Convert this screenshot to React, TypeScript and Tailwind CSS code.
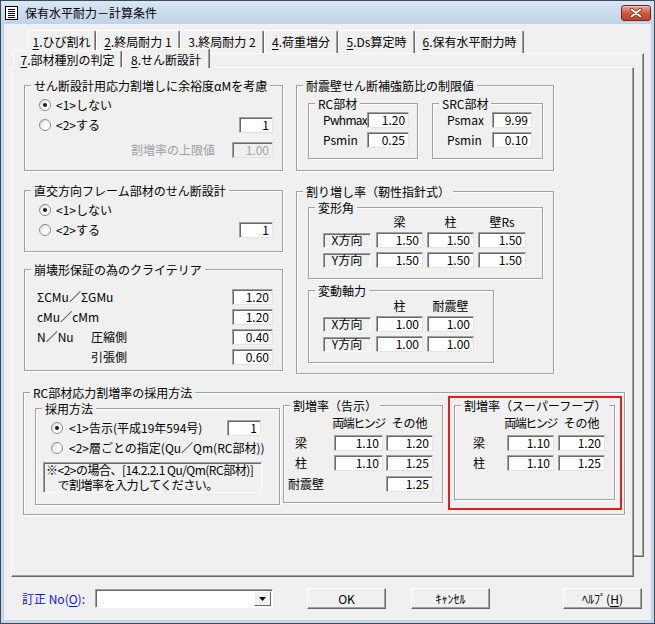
import React from "react";

const FONT = "font-['Noto_Sans_CJK_JP',sans-serif]";

type Kids = { children?: React.ReactNode };

const Group = ({ title, cls, children }: Kids & { title: string; cls: string }) => (
  <div
    className={`relative shrink-0 border border-[#a0a0a0] shadow-[1px_1px_0_#fff,inset_1px_1px_0_#fff] ${cls}`}
  >
    <span className="absolute -top-[7px] left-[6px] px-[3px] bg-[#f0f0f0] leading-[13px] whitespace-nowrap">
      {title}
    </span>
    {children}
  </div>
);

const Field = ({ v, w, dim }: { v: string; w: string; dim?: boolean }) => (
  <div
    className={`${w} h-[16px] shrink-0 flex items-center justify-end pr-[3px] border border-t-[#a0a0a0] border-l-[#a0a0a0] border-r-[#e3e3e3] border-b-[#e3e3e3] shadow-[inset_1px_1px_0_#696969] leading-none ${
      dim ? "bg-[#f0f0f0] text-[#a0a0a0]" : "bg-white text-black"
    }`}
  >
    {v}
  </div>
);

const RowLabel = ({ t }: { t: string }) => (
  <div className="w-[48px] h-[15px] shrink-0 flex items-center justify-center border border-t-[#a0a0a0] border-l-[#a0a0a0] border-r-white border-b-white shadow-[inset_1px_1px_0_#696969] bg-[#f0f0f0] leading-none">
    {t}
  </div>
);

const Radio = ({ on }: { on?: boolean }) => (
  <span className="w-[12px] h-[12px] shrink-0 rounded-full border border-[#8a8a8a] bg-linear-to-br from-[#cfcfcf] via-white to-white flex items-center justify-center">
    {on && <span className="w-[4px] h-[4px] rounded-full bg-[#1a1a1a]" />}
  </span>
);

const Tab = ({ n, label, cls }: { n: string; label: string; cls: string }) => (
  <div
    className={`shrink-0 flex justify-center bg-[#f0f0f0] border-t border-l border-r border-t-white border-l-white border-r-[#696969] rounded-t-[2px] shadow-[inset_-1px_0_0_#a0a0a0] whitespace-nowrap leading-[14px] ${cls}`}
  >
    <span>
      <span className="underline underline-offset-2">{n}</span>.{label}
    </span>
  </div>
);

const Btn = ({ children }: Kids) => (
  <div className="w-[79px] h-[21px] shrink-0 flex items-center justify-center border border-t-white border-l-white border-r-[#696969] border-b-[#696969] shadow-[inset_-1px_-1px_0_#a0a0a0] bg-[#f0f0f0] leading-none">
    {children}
  </div>
);

const TitleIcon = () => (
  <svg width="13" height="14" viewBox="0 0 13 14" className="shrink-0">
    <rect x="0.5" y="0.5" width="12" height="13" fill="#fff" stroke="#000" />
    <path d="M3 3.5h7M3 5.5h7M3 7.5h7M3 9.5h7M3 11.5h7" stroke="#000" />
  </svg>
);

const CloseBtn = () => (
  <div className="ml-auto mr-[3px] w-[30px] h-[16px] rounded-[3px] border border-[#6d2618] bg-linear-to-b from-[#e8a493] via-[#cf5a40] to-[#c0412a] flex items-center justify-center shadow-[inset_0_1px_0_#f3c6ba]">
    <svg width="12" height="10" viewBox="0 0 12 10">
      <path d="M1.5 1.5l9 7M10.5 1.5l-9 7" stroke="#5a1d12" strokeWidth="3.4" strokeLinecap="round" />
      <path d="M1.5 1.5l9 7M10.5 1.5l-9 7" stroke="#fff" strokeWidth="2" strokeLinecap="round" />
    </svg>
  </div>
);

const LeftColumn = () => (
  <div className="flex flex-col w-[259px] shrink-0">
    <Group title="せん断設計用応力割増しに余裕度αMを考慮" cls="h-[86px]">
      <div className="pt-[9px] pl-[14px] pr-[9px]">
        <div className="h-[20px] flex items-center">
          <Radio on />
          <span className="ml-[5px]">&lt;1&gt;しない</span>
        </div>
        <div className="h-[20px] flex items-center">
          <Radio />
          <span className="ml-[5px]">&lt;2&gt;する</span>
          <Field v="1" w="w-[34px] ml-auto" />
        </div>
        <div className="h-[20px] mt-[5px] flex items-center justify-end gap-[17px]">
          <span className="text-[#a0a0a0]">割増率の上限値</span>
          <Field v="1.00" w="w-[41px]" dim />
        </div>
      </div>
    </Group>

    <Group title="直交方向フレーム部材のせん断設計" cls="h-[62px] mt-[19px]">
      <div className="pt-[9px] pl-[14px] pr-[9px]">
        <div className="h-[20px] flex items-center">
          <Radio on />
          <span className="ml-[5px]">&lt;1&gt;しない</span>
        </div>
        <div className="h-[20px] flex items-center">
          <Radio />
          <span className="ml-[5px]">&lt;2&gt;する</span>
          <Field v="1" w="w-[34px] ml-auto" />
        </div>
      </div>
    </Group>

    <Group title="崩壊形保証の為のクライテリア" cls="h-[102px] mt-[17px]">
      <div className="pt-[17px] pl-[12px] pr-[9px]">
        <div className="h-[20px] flex items-center">
          <span>ΣCMu／ΣGMu</span>
          <Field v="1.20" w="w-[41px] ml-auto" />
        </div>
        <div className="h-[20px] flex items-center">
          <span>cMu／cMm</span>
          <Field v="1.20" w="w-[41px] ml-auto" />
        </div>
        <div className="h-[20px] flex items-center">
          <span className="w-[54px] shrink-0">N／Nu</span>
          <span>圧縮側</span>
          <Field v="0.40" w="w-[41px] ml-auto" />
        </div>
        <div className="h-[20px] flex items-center">
          <span className="w-[54px] shrink-0" />
          <span>引張側</span>
          <Field v="0.60" w="w-[41px] ml-auto" />
        </div>
      </div>
    </Group>
  </div>
);

const RightColumn = () => (
  <div className="flex flex-col w-[258px] shrink-0">
    <Group title="耐震壁せん断補強筋比の制限値" cls="h-[86px]">
      <div className="pt-[17px] pl-[11px] flex gap-[14px]">
        <Group title="RC部材" cls="w-[110px] h-[56px]">
          <div className="pt-[8px] pl-[14px] pr-[8px] flex flex-col gap-[4px]">
            <div className="h-[16px] flex items-center">
              <span className="tracking-[-0.7px]">Pwhmax</span>
              <Field v="1.20" w="w-[42px] ml-auto" />
            </div>
            <div className="h-[16px] flex items-center">
              <span>Psmin</span>
              <Field v="0.25" w="w-[42px] ml-auto" />
            </div>
          </div>
        </Group>
        <Group title="SRC部材" cls="w-[111px] h-[56px]">
          <div className="pt-[8px] pl-[14px] pr-[10px] flex flex-col gap-[4px]">
            <div className="h-[16px] flex items-center">
              <span>Psmax</span>
              <Field v="9.99" w="w-[40px] ml-auto" />
            </div>
            <div className="h-[16px] flex items-center">
              <span>Psmin</span>
              <Field v="0.10" w="w-[40px] ml-auto" />
            </div>
          </div>
        </Group>
      </div>
    </Group>

    <Group title="割り増し率（靭性指針式）" cls="h-[183px] mt-[20px]">
      <div className="pt-[15px] pl-[11px] flex flex-col gap-[11px]">
        <Group title="変形角" cls="w-[235px] h-[72px]">
          <div className="pt-[7px] pl-[14px]">
            <div className="h-[14px] flex">
              <div className="w-[48px]" />
              <div className="ml-[5px] w-[47px] flex justify-center">梁</div>
              <div className="ml-[4px] w-[47px] flex justify-center">柱</div>
              <div className="ml-[4px] w-[48px] flex justify-center">壁Rs</div>
            </div>
            {["X方向", "Y方向"].map((r, i) => (
              <div key={r} className={`h-[16px] flex items-center ${i === 0 ? "mt-[3px]" : "mt-[4px]"}`}>
                <RowLabel t={r} />
                <Field v="1.50" w="w-[47px] ml-[5px]" />
                <Field v="1.50" w="w-[47px] ml-[4px]" />
                <Field v="1.50" w="w-[48px] ml-[4px]" />
              </div>
            ))}
          </div>
        </Group>
        <Group title="変動軸力" cls="w-[186px] h-[73px]">
          <div className="pt-[8px] pl-[14px]">
            <div className="h-[14px] flex">
              <div className="w-[48px]" />
              <div className="ml-[5px] w-[47px] flex justify-center">柱</div>
              <div className="ml-[4px] w-[47px] flex justify-center">耐震壁</div>
            </div>
            {["X方向", "Y方向"].map((r, i) => (
              <div key={r} className={`h-[16px] flex items-center ${i === 0 ? "mt-[3px]" : "mt-[4px]"}`}>
                <RowLabel t={r} />
                <Field v="1.00" w="w-[47px] ml-[5px]" />
                <Field v="1.00" w="w-[47px] ml-[4px]" />
              </div>
            ))}
          </div>
        </Group>
      </div>
    </Group>
  </div>
);

const MethodGroup = () => (
  <Group title="RC部材応力割増率の採用方法" cls="w-[602px] h-[123px] mt-[18px] -ml-[1px]">
    <div className="flex items-start pl-[11px]">
      <Group title="採用方法" cls="w-[245px] h-[97px] mt-[15px]">
        <div className="pt-[9px] pl-[15px] pr-[18px]">
          <div className="h-[20px] flex items-center">
            <Radio on />
            <span className="ml-[6px] whitespace-nowrap">&lt;1&gt;告示(平成19年594号)</span>
            <Field v="1" w="w-[34px] ml-auto" />
          </div>
          <div className="h-[20px] flex items-center">
            <Radio />
            <span className="ml-[6px] whitespace-nowrap">&lt;2&gt;層ごとの指定(Qu／Qm(RC部材))</span>
          </div>
        </div>
        <div className="ml-[7px] mt-[4px] w-[219px] h-[31px] border border-t-[#a0a0a0] border-l-[#a0a0a0] border-r-white border-b-white shadow-[inset_1px_1px_0_#696969] bg-[#f0f0f0] pl-[2px] leading-[14px] whitespace-nowrap tracking-[-0.5px]">
          <div className="h-[14px]">※&lt;2&gt;の場合、[14.2.2.1 Qu/Qm(RC部材)]</div>
          <div className="h-[14px] mt-[1px]">　で割増率を入力してください。</div>
        </div>
      </Group>

      <Group title="割増率（告示）" cls="w-[160px] h-[98px] mt-[12px] ml-[3px]">
        <div className="pt-[10px]">
          <div className="h-[14px] flex whitespace-nowrap">
            <div className="w-[50px] shrink-0" />
            <div className="w-[49px] shrink-0 flex justify-center tracking-[-1.5px]">両端ヒンジ</div>
            <div className="ml-[3px] w-[47px] shrink-0 flex justify-center">その他</div>
          </div>
          <div className="mt-[5px] h-[16px] flex items-center">
            <span className="w-[50px] shrink-0 pl-[11px]">梁</span>
            <Field v="1.10" w="w-[49px]" />
            <Field v="1.20" w="w-[47px] ml-[3px]" />
          </div>
          <div className="mt-[4px] h-[16px] flex items-center">
            <span className="w-[50px] shrink-0 pl-[11px]">柱</span>
            <Field v="1.10" w="w-[49px]" />
            <Field v="1.25" w="w-[47px] ml-[3px]" />
          </div>
          <div className="mt-[5px] h-[16px] flex items-center">
            <span className="w-[102px] shrink-0 pl-[4px]">耐震壁</span>
            <Field v="1.25" w="w-[47px]" />
          </div>
        </div>
      </Group>

      <div className="w-[174px] h-[114px] shrink-0 mt-[3px] ml-[5px] border-2 border-[#e0201c] pl-[4px] pt-[7px]">
        <Group title="割増率（スーパーフープ）" cls="w-[161px] h-[95px]">
          <div className="pt-[10px]">
            <div className="h-[14px] flex whitespace-nowrap">
              <div className="w-[52px] shrink-0" />
              <div className="w-[47px] shrink-0 flex justify-center tracking-[-1.5px]">両端ヒンジ</div>
              <div className="ml-[4px] w-[47px] shrink-0 flex justify-center">その他</div>
            </div>
            <div className="mt-[5px] h-[16px] flex items-center">
              <span className="w-[52px] shrink-0 pl-[18px]">梁</span>
              <Field v="1.10" w="w-[47px]" />
              <Field v="1.20" w="w-[47px] ml-[4px]" />
            </div>
            <div className="mt-[4px] h-[16px] flex items-center">
              <span className="w-[52px] shrink-0 pl-[18px]">柱</span>
              <Field v="1.10" w="w-[47px]" />
              <Field v="1.25" w="w-[47px] ml-[4px]" />
            </div>
          </div>
        </Group>
      </div>
    </div>
  </Group>
);

export default function App() {
  return (
    <div
      className={`w-[655px] h-[624px] flex flex-col border border-[#3d4a5c] bg-[#c4d5ea] text-[12px] leading-[14px] text-black ${FONT}`}
    >
      {/* title bar */}
      <div className="h-[23px] shrink-0 flex items-center pl-[4px] bg-linear-to-b from-[#d9e6f5] to-[#c0d3ea]">
        <TitleIcon />
        <span className="ml-[7px] text-[12px]">保有水平耐力－計算条件</span>
        <CloseBtn />
      </div>

      {/* client */}
      <div className="flex-1 mx-[3px] mb-[3px] bg-[#f0f0f0] flex flex-col">
        <div className="relative ml-[7px] mt-[4px] w-[633px] h-[549px] shrink-0">
          {/* back row pane edge */}
          <div className="absolute left-0 top-[25px] w-[633px] h-[504px] border-t border-t-white border-r border-r-[#696969] border-b border-b-[#696969] shadow-[inset_-1px_-1px_0_#a0a0a0]" />

          <div className="relative flex pl-[16px] pt-[2px] h-[25px]">
            <Tab n="1" label="ひび割れ" cls="w-[69px] h-[23px] pt-[4px]" />
            <Tab n="2" label="終局耐力 1" cls="w-[84px] h-[23px] pt-[4px]" />
            <Tab n="3" label="終局耐力 2" cls="w-[84px] h-[23px] pt-[4px]" />
            <Tab n="4" label="荷重増分" cls="w-[74px] h-[23px] pt-[4px]" />
            <Tab n="5" label="Ds算定時" cls="w-[77px] h-[23px] pt-[4px]" />
            <Tab n="6" label="保有水平耐力時" cls="w-[109px] h-[23px] pt-[4px]" />
          </div>

          <div className="relative z-10 flex items-start pl-[2px] -mt-[4px] h-[19px]">
            <Tab n="7" label="部材種別の判定" cls="w-[109px] h-[17px] mt-[1px] pt-[2px]" />
            <Tab n="8" label="せん断設計" cls="w-[88px] h-[20px] -mt-[1px] pt-[4px]" />
          </div>

          <div className="relative -mt-[1px] w-[623px] h-[510px] border border-t-white border-l-white border-r-[#696969] border-b-[#696969] shadow-[inset_-1px_-1px_0_#a0a0a0] bg-[#f0f0f0] pt-[17px] pl-[12px]">
            <div className="flex items-start gap-[13px]">
              <LeftColumn />
              <RightColumn />
            </div>
            <MethodGroup />
          </div>
        </div>

        {/* bottom bar */}
        <div className="mt-[11px] h-[21px] flex items-center pl-[18px]">
          <span className="w-[73px] shrink-0 text-[#1010ee]">
            訂正 No(<span className="underline underline-offset-2">O</span>):
          </span>
          <div className="w-[178px] h-[19px] shrink-0 flex justify-end p-[1px] border border-t-[#a0a0a0] border-l-[#a0a0a0] border-r-white border-b-white shadow-[inset_1px_1px_0_#696969] bg-white">
            <div className="w-[17px] h-full flex items-center justify-center bg-[#f0f0f0] border border-t-white border-l-white border-r-[#696969] border-b-[#696969]">
              <svg width="7" height="4" viewBox="0 0 7 4">
                <path d="M0 0h7L3.5 4z" fill="#000" />
              </svg>
            </div>
          </div>
          <div className="ml-[34px]">
            <Btn>OK</Btn>
          </div>
          <div className="ml-[25px]">
            <Btn>ｷｬﾝｾﾙ</Btn>
          </div>
          <div className="ml-[73px]">
            <Btn>
              ﾍﾙﾌﾟ(<span className="underline underline-offset-2">H</span>)
            </Btn>
          </div>
        </div>
      </div>
    </div>
  );
}
